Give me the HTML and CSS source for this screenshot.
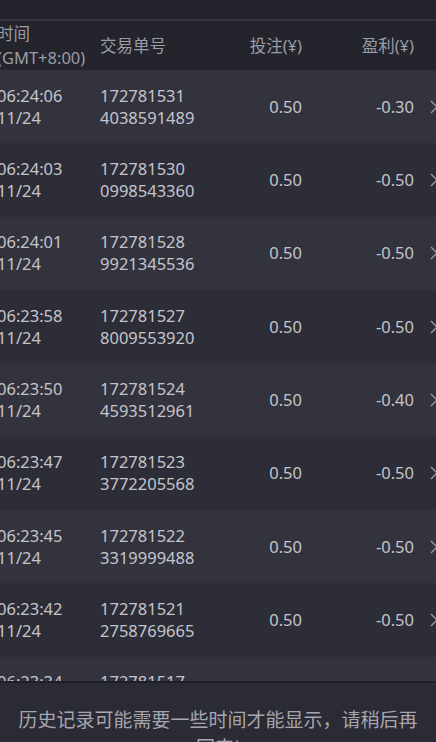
FILE: index.html
```html
<!DOCTYPE html>
<html lang="zh">
<head>
<meta charset="utf-8">
<title>投注记录</title>
<link rel="stylesheet" href="styles.css">
</head>
<body>
<div class="topbar"></div>
<div class="divider"></div>
<div class="table">
  <div class="thead">
    <div class="c-time">时间<br>(GMT+8:00)</div>
    <div class="c-id">交易单号</div>
    <div class="c-bet">投注(¥)</div>
    <div class="c-pl">盈利(¥)</div>
    <div class="c-arrow"></div>
  </div>
  <div class="row odd">
    <div class="c-time">06:24:06<br>11/24</div>
    <div class="c-id">172781531<br>4038591489</div>
    <div class="c-bet">0.50</div>
    <div class="c-pl">-0.30</div>
    <div class="c-arrow"><svg class="chev" viewBox="0 0 8 14"><polyline points="1,1 7,7 1,13"/></svg></div>
  </div>
  <div class="row even">
    <div class="c-time">06:24:03<br>11/24</div>
    <div class="c-id">172781530<br>0998543360</div>
    <div class="c-bet">0.50</div>
    <div class="c-pl">-0.50</div>
    <div class="c-arrow"><svg class="chev" viewBox="0 0 8 14"><polyline points="1,1 7,7 1,13"/></svg></div>
  </div>
  <div class="row odd">
    <div class="c-time">06:24:01<br>11/24</div>
    <div class="c-id">172781528<br>9921345536</div>
    <div class="c-bet">0.50</div>
    <div class="c-pl">-0.50</div>
    <div class="c-arrow"><svg class="chev" viewBox="0 0 8 14"><polyline points="1,1 7,7 1,13"/></svg></div>
  </div>
  <div class="row even">
    <div class="c-time">06:23:58<br>11/24</div>
    <div class="c-id">172781527<br>8009553920</div>
    <div class="c-bet">0.50</div>
    <div class="c-pl">-0.50</div>
    <div class="c-arrow"><svg class="chev" viewBox="0 0 8 14"><polyline points="1,1 7,7 1,13"/></svg></div>
  </div>
  <div class="row odd">
    <div class="c-time">06:23:50<br>11/24</div>
    <div class="c-id">172781524<br>4593512961</div>
    <div class="c-bet">0.50</div>
    <div class="c-pl">-0.40</div>
    <div class="c-arrow"><svg class="chev" viewBox="0 0 8 14"><polyline points="1,1 7,7 1,13"/></svg></div>
  </div>
  <div class="row even">
    <div class="c-time">06:23:47<br>11/24</div>
    <div class="c-id">172781523<br>3772205568</div>
    <div class="c-bet">0.50</div>
    <div class="c-pl">-0.50</div>
    <div class="c-arrow"><svg class="chev" viewBox="0 0 8 14"><polyline points="1,1 7,7 1,13"/></svg></div>
  </div>
  <div class="row odd">
    <div class="c-time">06:23:45<br>11/24</div>
    <div class="c-id">172781522<br>3319999488</div>
    <div class="c-bet">0.50</div>
    <div class="c-pl">-0.50</div>
    <div class="c-arrow"><svg class="chev" viewBox="0 0 8 14"><polyline points="1,1 7,7 1,13"/></svg></div>
  </div>
  <div class="row even">
    <div class="c-time">06:23:42<br>11/24</div>
    <div class="c-id">172781521<br>2758769665</div>
    <div class="c-bet">0.50</div>
    <div class="c-pl">-0.50</div>
    <div class="c-arrow"><svg class="chev" viewBox="0 0 8 14"><polyline points="1,1 7,7 1,13"/></svg></div>
  </div>
  <div class="row odd">
    <div class="c-time">06:23:34<br>11/24</div>
    <div class="c-id">172781517<br>6604418832</div>
    <div class="c-bet">0.50</div>
    <div class="c-pl">-0.50</div>
    <div class="c-arrow"><svg class="chev" viewBox="0 0 8 14"><polyline points="1,1 7,7 1,13"/></svg></div>
  </div>
</div>
<div class="notice">历史记录可能需要一些时间才能显示，请稍后再回来!</div>
</body>
</html>
```
FILE: styles.css
```css
html, body {
  margin: 0;
  padding: 0;
  height: 100%;
  overflow: hidden;
  background: #2d2d37;
  font-family: "Noto Sans", "Noto Sans CJK SC", sans-serif;
}

.topbar {
  height: 19px;
  background: #24242d;
}

.divider {
  height: 2px;
  background: #34343e;
}

.table {
  margin-left: -3px;
  width: 460px;
}

.thead,
.row {
  display: grid;
  grid-template-columns: 103px 130px 72px 112px 1fr;
  align-items: center;
}

.thead {
  height: 49px;
  background: #24242d;
  color: #9c9ca5;
  font-size: 16.5px;
  line-height: 24px;
}

.row {
  height: 73.33px;
  color: #c4c4cc;
  font-size: 16.5px;
  line-height: 22px;
}

.row.odd {
  background: #33333d;
}

.row.even {
  background: #2d2d37;
}

.c-bet,
.c-pl {
  text-align: right;
}

.c-arrow {
  padding-left: 16px;
  display: flex;
  align-items: center;
}

.chev {
  width: 8px;
  height: 14px;
  fill: none;
  stroke: #9a9aa3;
  stroke-width: 1.3;
}

.notice {
  position: fixed;
  left: 0;
  right: 0;
  bottom: 0;
  height: 37px;
  border-top: 2px solid #1f1f27;
  background: #2b2b35;
  color: #a6a6ae;
  font-family: "Noto Sans CJK SC", sans-serif;
  font-size: 19px;
  line-height: 28px;
  text-align: center;
  padding: 22px 16px 0;
  box-sizing: content-box;
  overflow: hidden;
}
```
